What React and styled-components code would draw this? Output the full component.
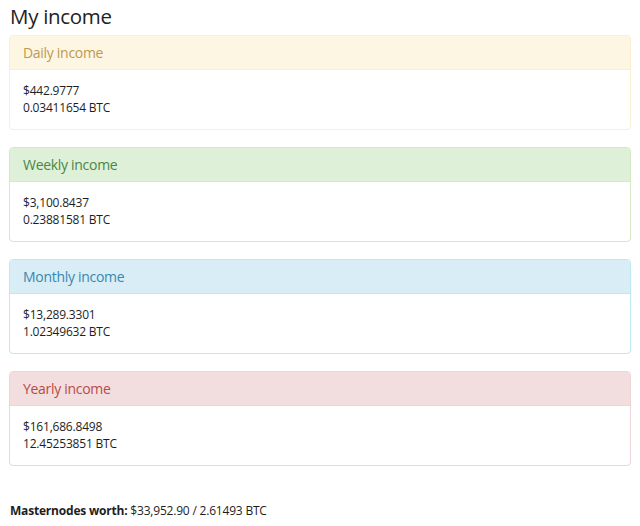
import React from "react";
import styled, { createGlobalStyle } from "styled-components";

const Global = createGlobalStyle`
  html, body { margin: 0; padding: 0; background: #fff; }
  body {
    font-family: "Open Sans", "Noto Sans", sans-serif;
    font-size: 12px;
    letter-spacing: -0.2px;
    color: #333;
  }
`;

const Page = styled.div`
  padding: 0 9px 0 9px;
`;

const Title = styled.h1`
  margin: 0;
  padding: 3px 0 0 1px;
  height: 32px;
  font-size: 20.5px;
  font-weight: 400;
  letter-spacing: -0.3px;
  line-height: 26px;
  color: #222;
`;

const themes = {
  warning: { bg: "#fcf6e2", border: "#fbeed5", text: "#c09853" },
  success: { bg: "#dff0d8", border: "#d6e9c6", text: "#468847" },
  info: { bg: "#d9edf7", border: "#bce8f1", text: "#3a87ad" },
  danger: { bg: "#f2dede", border: "#eed3d7", text: "#b94a48" },
};

const Panel = styled.section`
  border: 1px solid ${(p) => themes[p.$kind].border};
  border-radius: 4px;
  margin-bottom: 17px;
  overflow: hidden;
`;

const Heading = styled.div`
  background: ${(p) => themes[p.$kind].bg};
  border-bottom: 1px solid ${(p) => themes[p.$kind].border};
  color: ${(p) => themes[p.$kind].text};
  padding: 0 13px;
  height: 33px;
  display: flex;
  align-items: center;
  font-size: 14px;
  letter-spacing: -0.3px;
`;

const Body = styled.div`
  padding: 12px 13px 13px;
  line-height: 17px;
  font-size: 12px;
  color: #1e1e1e;
`;

const Footer = styled.p`
  margin: 36px 0 0 1px;
  font-size: 12px;
  color: #1e1e1e;
  b { font-weight: 700; }
`;

const data = [
  { kind: "warning", title: "Daily income", usd: "$442.9777", btc: "0.03411654 BTC" },
  { kind: "success", title: "Weekly income", usd: "$3,100.8437", btc: "0.23881581 BTC" },
  { kind: "info", title: "Monthly income", usd: "$13,289.3301", btc: "1.02349632 BTC" },
  { kind: "danger", title: "Yearly income", usd: "$161,686.8498", btc: "12.45253851 BTC" },
];

export default function App() {
  return (
    <Page>
      <Global />
      <Title>My income</Title>
      {data.map((d) => (
        <Panel key={d.title} $kind={d.kind}>
          <Heading $kind={d.kind}>{d.title}</Heading>
          <Body>
            <div>{d.usd}</div>
            <div>{d.btc}</div>
          </Body>
        </Panel>
      ))}
      <Footer>
        <b>Masternodes worth:</b> $33,952.90 / 2.61493 BTC
      </Footer>
    </Page>
  );
}
